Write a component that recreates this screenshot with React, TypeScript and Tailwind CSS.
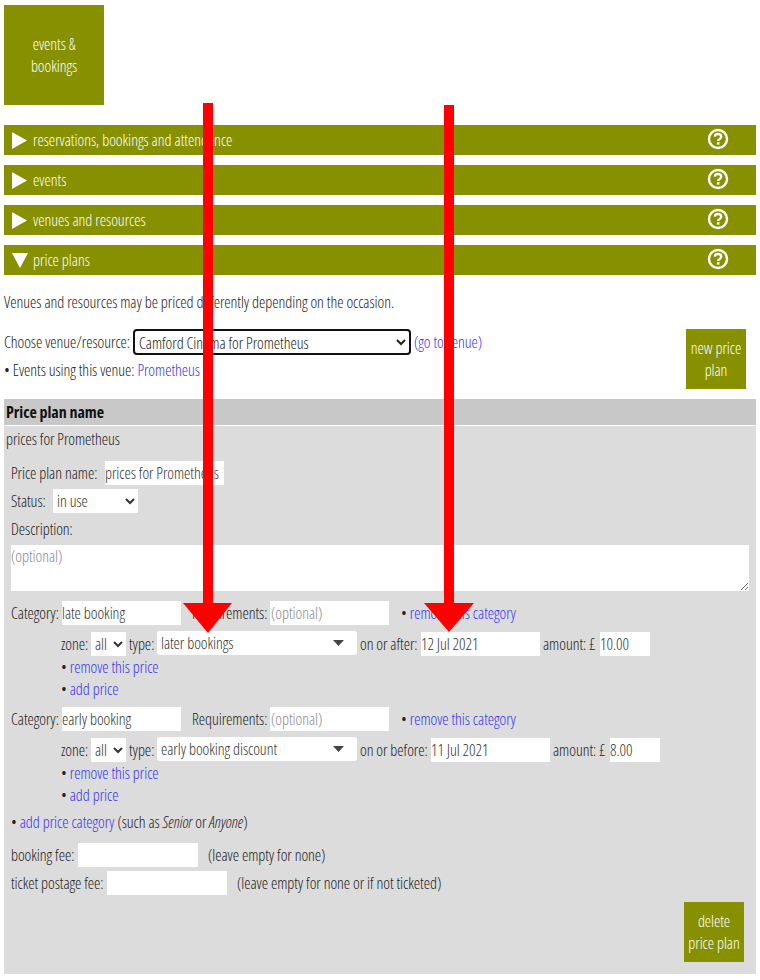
const font = "[font-family:'Open_Sans',sans-serif]";

function Bar({ label, open }: { label: string; open?: boolean }) {
  return (
    <div className="flex items-center h-[30px] mb-[10px] bg-[#879100] text-white">
      <div className="w-[29px] flex justify-center pl-[2px]">
        {open ? (
          <svg width="16" height="15" viewBox="0 0 16 15"><path d="M0 0H16L8 15Z" fill="#fff" /></svg>
        ) : (
          <svg width="15" height="17" viewBox="0 0 15 17"><path d="M0 0L15 8.5L0 17Z" fill="#fff" /></svg>
        )}
      </div>
      <span className="flex-1 -mt-[1px] tracking-[-0.02px]">{label}</span>
      <svg className="mr-[27px] mb-[2px]" width="22" height="22" viewBox="0 0 22 22" fill="none">
        <circle cx="11" cy="11" r="9" stroke="#fff" strokeWidth="2.4" />
        <path d="M7.8 8.6C7.9 6.8 9.2 6 11 6c1.9 0 3.2 1 3.2 2.6 0 2.4-3 2.2-3 4.4" stroke="#fff" strokeWidth="2.4" />
        <rect x="9.9" y="14.2" width="2.6" height="2.4" fill="#fff" />
      </svg>
    </div>
  );
}

function Btn({ children, w = "w-[60px]", h = "h-[60px]" }: { children: React.ReactNode; w?: string; h?: string }) {
  return (
    <div className={`${w} ${h} bg-[#879100] text-white flex items-center justify-center text-center leading-[22px] shrink-0`}>
      <div className="-mt-[1px]">{children}</div>
    </div>
  );
}

function Field({ value, placeholder, w }: { value?: string; placeholder?: string; w: string }) {
  return (
    <input
      readOnly
      value={value ?? ""}
      placeholder={placeholder}
      className={`${w} h-[24px] bg-white ${placeholder ? "px-[1px]" : "px-0"} text-[#333] placeholder:text-[#8a8a8a] outline-none shrink-0`}
    />
  );
}

function NativeSelect({ value, w }: { value: string; w: string }) {
  return (
    <select
      defaultValue={value}
      className={`${w} h-[24px] bg-white text-[#333] shrink-0 [appearance:auto] border-0`}
    >
      <option>{value}</option>
    </select>
  );
}

function A({ children }: { children: React.ReactNode }) {
  return <a className="text-[#3a34f0]">{children}</a>;
}

function PriceRow(p: { type: string; dateLabel: string; date: string; amount: string; gapAmount: string; gapDate: string }) {
  return (
    <div className="pl-[57px]">
      <div className="flex items-center h-[24px]">
        <span className="w-[30px]">zone:</span>
        <NativeSelect value="all" w="w-[35px]" />
        <span className="ml-[3px] w-[28px]">type:</span>
        <div className="w-[200px] h-[24px] -mt-[2px] bg-white rounded-[3px] flex items-center justify-between pl-[4px] pr-[13px] text-[#333] shrink-0">
          <span>{p.type}</span>
          <svg width="11" height="6" viewBox="0 0 11 6"><path d="M0 0H11L5.5 6Z" fill="#444" /></svg>
        </div>
        <span className={`ml-[3px] ${p.gapDate}`}>{p.dateLabel}</span>
        <Field value={p.date} w="w-[119px]" />
        <span className={`ml-[3px] ${p.gapAmount}`}>amount: £</span>
        <Field value={p.amount} w="w-[50px]" />
      </div>
      <div className="h-[22px] leading-[22px]">• <A>remove this price</A></div>
      <div className="h-[22px] leading-[22px]">• <A>add price</A></div>
    </div>
  );
}

function Category({ value }: { value: string }) {
  return (
    <div className="flex items-center h-[24px] pl-[7px]">
      <span className="w-[51px] whitespace-nowrap">Category:</span>
      <Field value={value} w="w-[119px]" />
      <span className="ml-[11px] w-[78px] whitespace-nowrap">Requirements:</span>
      <Field placeholder="(optional)" w="w-[119px]" />
      <span className="ml-[12px]">• <A>remove this category</A></span>
    </div>
  );
}

function Arrows() {
  return (
    <svg className="absolute left-0 top-0 pointer-events-none" width="760" height="660" viewBox="0 0 760 660">
      <path d="M203 103H213V603H232L208 633L183 603H203Z" fill="#ff0000" />
      <path d="M444 105H454V603H474L449 632L424 603H444Z" fill="#ff0000" />
    </svg>
  );
}

export default function App() {
  return (
    <div className={`relative w-[760px] h-[980px] bg-white overflow-hidden text-[16px] tracking-[-0.05px] font-light leading-[22px] text-[#222] [font-stretch:75%] ${font}`}>
      <div className="px-[4px] pt-[5px]">
        <div className="mb-[20px]">
          <Btn w="w-[100px]" h="h-[100px]">events &amp;<br />bookings</Btn>
        </div>
        <div>
          <Bar label="reservations, bookings and attendance" />
          <Bar label="events" />
          <Bar label="venues and resources" />
          <Bar label="price plans" open />
        </div>
        <p className="mt-[16px] h-[22px]">Venues and resources may be priced differently depending on the occasion.</p>

        <div className="mt-[16px] flex justify-between pr-[10px] h-[70px]">
          <div>
            <div className="flex items-center h-[26px]">
              <span className="w-[129px] whitespace-nowrap">Choose venue/resource:</span>
              <select defaultValue="c" className="w-[278px] h-[26px] border-2 border-[#111] rounded-[4px] bg-white text-[#222] [appearance:auto]">
                <option value="c">Camford Cinema for Prometheus</option>
              </select>
              <span className="ml-[3px]"><A>(go to venue)</A></span>
            </div>
            <div className="mt-[4px]">• Events using this venue: <A>Prometheus</A></div>
          </div>
          <Btn>new price<br />plan</Btn>
        </div>

        <div className="h-[26px] bg-[#c8c8c8] pl-[2px] flex items-center font-bold text-[#111]">Price plan name</div>
        <div className="mt-[1px] bg-[#dcdcdc] h-[548px]">
          <div className="pl-[2px] h-[27px] leading-[26px]">prices for Prometheus</div>
          <div className="mt-[8px] pl-[7px]">
            <div className="flex items-center h-[24px]">
              <span className="w-[94px] whitespace-nowrap">Price plan name:</span>
              <Field value="prices for Prometheus" w="w-[119px]" />
            </div>
            <div className="flex items-center h-[24px] mt-[4px]">
              <span className="w-[42px]">Status:</span>
              <NativeSelect value="in use" w="w-[85px]" />
            </div>
            <div className="h-[24px] mt-[4px] leading-[24px]">Description:</div>
            <textarea
              readOnly
              placeholder="(optional)"
              className="block mt-[4px] w-[738px] h-[46px] bg-white px-0 py-0 placeholder:text-[#8a8a8a] outline-none"
            />
          </div>

          <div className="mt-[10px]"><Category value="late booking" /></div>
          <div className="mt-[7px]">
            <PriceRow type="later bookings" dateLabel="on or after:" date="12 Jul 2021" amount="10.00" gapDate="w-[61px] whitespace-nowrap" gapAmount="w-[57px] whitespace-nowrap" />
          </div>
          <div className="mt-[7px]"><Category value="early booking" /></div>
          <div className="mt-[7px]">
            <PriceRow type="early booking discount" dateLabel="on or before:" date="11 Jul 2021" amount="8.00" gapDate="w-[71px] whitespace-nowrap" gapAmount="w-[57px] whitespace-nowrap" />
          </div>
          <div className="mt-[5px] pl-[7px] h-[22px]">
            • <A>add price category</A> (such as <i>Senior</i> or <i>Anyone</i>)
          </div>
          <div className="mt-[10px] pl-[7px] flex items-center h-[24px]">
            <span className="w-[67px] whitespace-nowrap">booking fee:</span>
            <Field w="w-[120px]" />
            <span className="ml-[10px]">(leave empty for none)</span>
          </div>
          <div className="mt-[4px] pl-[7px] flex items-center h-[24px]">
            <span className="w-[96px] whitespace-nowrap">ticket postage fee:</span>
            <Field w="w-[120px]" />
            <span className="ml-[10px]">(leave empty for none or if not ticketed)</span>
          </div>
          <div className="mt-[7px] flex justify-end pr-[12px]">
            <Btn>delete<br />price plan</Btn>
          </div>
        </div>
      </div>
      <Arrows />
    </div>
  );
}
